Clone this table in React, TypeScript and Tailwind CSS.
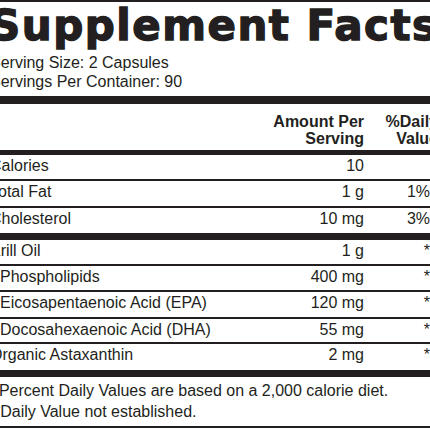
const rows = [
  { label: 'Calories', amount: '10', dv: '', h: 'h-[26px]', line: 'border-b-2' },
  { label: 'Total Fat', amount: '1 g', dv: '1%', h: 'h-[27px]', line: 'border-b-2' },
  { label: 'Cholesterol', amount: '10 mg', dv: '3%', h: 'h-[32px]', line: 'border-b-[7px]' },
  { label: 'Krill Oil', amount: '1 g', dv: '*', h: 'h-[26px]', line: 'border-b-2' },
  { label: 'Phospholipids', amount: '400 mg', dv: '*', h: 'h-[26px]', line: 'border-b-2', sub: true },
  { label: 'Eicosapentaenoic Acid (EPA)', amount: '120 mg', dv: '*', h: 'h-[27px]', line: 'border-b-2', sub: true },
  { label: 'Docosahexaenoic Acid (DHA)', amount: '55 mg', dv: '*', h: 'h-[25px]', line: 'border-b-2', sub: true },
  { label: 'Organic Astaxanthin', amount: '2 mg', dv: '*', h: 'h-[33px]', line: 'border-b-[7px]' },
];

export default function App() {
  return (
    <div className="w-[430px] h-[430px] overflow-hidden bg-white">
      <div className="-ml-[16px] w-[470px] border-t-2 border-[#231f20] text-[#231f20] font-['Liberation_Sans',Arial,sans-serif]">
        <div className="pl-[6px] pt-[3px] h-[42px] text-[42px] leading-[42px] font-bold tracking-[1.5px] whitespace-nowrap font-['DejaVu_Sans',sans-serif] [-webkit-text-stroke:1.4px_#231f20]">
          Supplement Facts
        </div>

        <div className="pl-[6px] mt-[9px] pb-[5px] text-[16px] leading-[19px] border-b-[8px] border-[#231f20]">
          <p>Serving Size: 2 Capsules</p>
          <p>Servings Per Container: 90</p>
        </div>

        {/* column header */}
        <div className="flex pl-[6px] pt-[9px] pb-[3px] text-[16px] leading-[17px] font-bold border-b-[5px] border-[#231f20]">
          <div className="flex-1" />
          <div className="w-[110px] text-right">
            Amount Per
            <br />
            Serving
          </div>
          <div className="w-[90px] pr-[16px] text-right">
            %Daily
            <br />
            Value
          </div>
        </div>

        {rows.map((r) => (
          <div
            key={r.label}
            className={`flex pl-[6px] pt-[2px] text-[16px] leading-[18px] border-[#231f20] ${r.h} ${r.line}`}
          >
            <div className={`flex-1 whitespace-nowrap ${r.sub ? 'pl-[10px]' : ''}`}>{r.label}</div>
            <div className="w-[110px] text-right whitespace-nowrap">{r.amount}</div>
            <div className="w-[90px] pr-[24px] text-right">{r.dv}</div>
          </div>
        ))}

        <div className="pl-[6px] pt-[4px] pb-[4px] text-[16px] leading-[20.5px] whitespace-nowrap border-b-2 border-[#231f20]">
          <p>†Percent Daily Values are based on a 2,000 calorie diet.</p>
          <p className="pl-[4px]">*Daily Value not established.</p>
        </div>
      </div>
    </div>
  );
}
